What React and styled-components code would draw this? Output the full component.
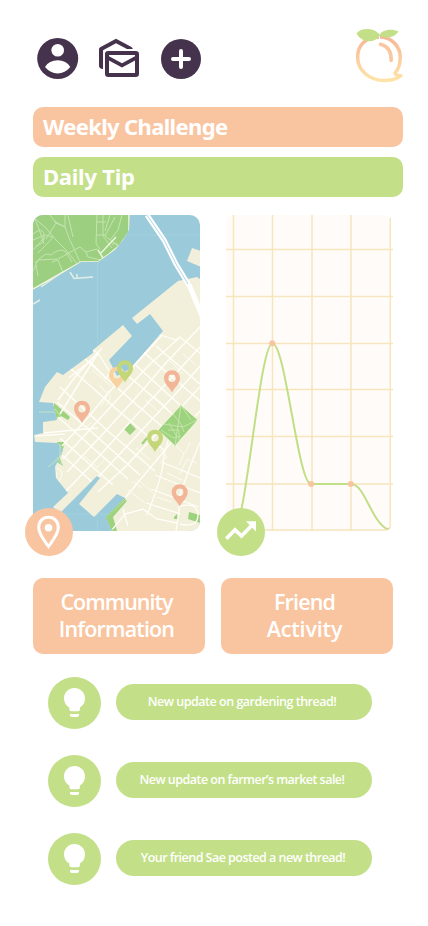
import React from "react";
import styled, { createGlobalStyle } from "styled-components";

const GlobalStyle = createGlobalStyle`
  * { box-sizing: border-box; }
  body { margin: 0; background: #fff; font-family: "Open Sans", "Noto Sans", sans-serif; }
  button { border: 0; padding: 0; margin: 0; background: none; font-family: inherit; color: inherit; }
  svg { display: block; }
`;

const peach = "#f9c5a1";
const lime = "#c3e088";
const plum = "#45334d";

const Page = styled.main`
  width: 428px;
  height: 926px;
  display: flex;
  flex-direction: column;
  padding: 27px 25px 0 33px;
  overflow: hidden;
  background: #fff;
`;

const Toolbar = styled.header`
  height: 80px;
  display: flex;
  justify-content: space-between;
  align-items: flex-start;
`;

const Actions = styled.nav`
  display: flex;
  gap: 14px;
  padding: 8px 0 0 1px;
`;

const IconButton = styled.button`
  width: 48px;
  height: 48px;
`;

const Banners = styled.section`
  display: flex;
  flex-direction: column;
  gap: 10px;
`;

const Banner = styled.h2`
  height: 40px;
  margin: 0;
  padding: 0 10px;
  border-radius: 10px;
  background: ${(p) => p.$color};
  color: #fff;
  font-family: "Noto Sans", sans-serif;
  font-size: 22px;
  font-weight: 700;
  line-height: 39px;
  letter-spacing: ${(p) => p.$tracking}px;
  white-space: nowrap;
`;

const Widgets = styled.section`
  display: flex;
  gap: 25px;
  padding-top: 18px;
`;

const Widget = styled.article`
  position: relative;
  width: ${(p) => p.$width}px;
  height: 316px;
`;

const MapFrame = styled.div`
  height: 100%;
  overflow: hidden;
  border-radius: 10px 10px 10px 0;
`;

const ChartFrame = styled.div`
  height: 100%;
  padding-left: 1px;
`;

const Badge = styled.span`
  position: absolute;
  left: -8px;
  bottom: -25px;
  width: 48px;
  height: 48px;
  border-radius: 50%;
  background: ${(p) => p.$color};
`;

const Choices = styled.section`
  display: flex;
  gap: 16px;
  padding-top: 47px;
`;

const Choice = styled.button`
  width: 172px;
  height: 76px;
  padding: 0 ${(p) => p.$inset}px 3px 0;
  border-radius: 10px;
  background: ${peach};
  color: #fff;
  font-size: 21.5px;
  font-weight: 600;
  line-height: 27px;
  text-align: center;
`;

const ChoiceLine = styled.span`
  display: block;
  letter-spacing: ${(p) => p.$tracking}px;
`;

const Feed = styled.ul`
  list-style: none;
  margin: 0;
  padding: 23px 0 0 15px;
  display: flex;
  flex-direction: column;
  gap: 26px;
`;

const FeedItem = styled.li`
  height: 52px;
  display: flex;
  align-items: flex-start;
  gap: 15px;
`;

const Bulb = styled.span`
  width: 53px;
  height: 52px;
  border-radius: 50%;
  background: ${lime};
`;

const Message = styled.p`
  width: 256px;
  height: 36px;
  margin: 7px 0 0;
  padding-right: ${(p) => p.$inset}px;
  border-radius: 18px;
  background: ${lime};
  color: #fff;
  font-size: 12.5px;
  font-weight: 600;
  line-height: 36px;
  text-align: center;
  letter-spacing: ${(p) => p.$tracking}px;
  white-space: nowrap;
`;

function AccountIcon() {
  return (
    <svg width="48" height="48" viewBox="34 35 48 48">
      <circle cx="57.7" cy="58.5" r="20.5" fill={plum} />
      <circle cx="57.7" cy="50.3" r="6.3" fill="#fff" />
      <path d="M45 67Q49 60.3 57.7 60.3T70.3 67Q65 73.4 57.7 73.4T45 67Z" fill="#fff" />
    </svg>
  );
}

function MailIcon() {
  return (
    <svg width="48" height="48" viewBox="96 35 48 48" fill="none">
      <path d="M99 49.3Q99 48 100.2 47.3L116 38.7L131 46.7Q132.6 47.7 132.8 49H127L116 43.2L103 50.3V69Q99 68.6 99 65.5Z" fill={plum} />
      <path
        fillRule="evenodd"
        fill={plum}
        d="M108.3 51H135.7Q139 51 139 54.3V73.7Q139 77 135.7 77H108.3Q105 77 105 73.7V54.3Q105 51 108.3 51ZM109 55V56.3L122 63.2L135 56.3V55ZM109 60.5V73H135V60.5L122 67.5Z"
      />
    </svg>
  );
}

function AddIcon() {
  return (
    <svg width="48" height="48" viewBox="158 35 48 48">
      <circle cx="181" cy="59" r="20" fill={plum} />
      <path d="M181 51V67M173 59H189" stroke="#fff" strokeWidth="4" strokeLinecap="round" />
    </svg>
  );
}

function PeachLogo() {
  return (
    <svg width="50" height="58" viewBox="353 27 50 58" fill="none">
      <defs>
        <linearGradient id="peachSkin" x1="0" y1="36" x2="0" y2="82" gradientUnits="userSpaceOnUse">
          <stop offset="0" stopColor="#f8b595" />
          <stop offset="1" stopColor="#fee5a9" />
        </linearGradient>
      </defs>
      <path
        d="M379 37.5C366 36 357.6 46 357.6 57C357.6 71 370 80.5 384 80.5C391 80.5 397 79 400.8 75.7C397 75.8 395 75 395 73C399 69 400.2 64 400.2 57C400.2 47 392 37 380 37"
        stroke="url(#peachSkin)" strokeWidth="3.5" strokeLinejoin="round"
      />
      <path d="M380.5 44.3C388 46 391.3 52 391.2 60.5" stroke="#fac7a2" strokeWidth="3.6" strokeLinecap="round" />
      <path d="M356.5 33.5C361 27.5 374 27.5 379.5 34.5C383 29 393 28.5 398.5 31.5C395 36.5 388 40 380 35.5C375 43.5 362 43.5 356.5 33.5Z" fill={lime} />
    </svg>
  );
}

const pins = [
  { x: 117, y: 376, color: "#f8d39f" },
  { x: 125, y: 369.5, color: "#c3d779" },
  { x: 172, y: 379.5, color: "#f3b598" },
  { x: 82, y: 410, color: "#f3b598" },
  { x: 155, y: 439, color: "#c3d779" },
  { x: 179.7, y: 493.5, color: "#f3b598" },
];

function MapPin({ x, y, color }) {
  return (
    <path
      transform={`translate(${x} ${y})`}
      fill={color}
      fillRule="evenodd"
      d="M0 13C-1.7 8.5-8 4.5-8-1.3C-8-6-4.4-9.3 0-9.3S8-6 8-1.3C8 4.5 1.7 8.5 0 13ZM0-5A3.7 3.7 0 1 0 0 2.4A3.7 3.7 0 1 0 0-5Z"
    />
  );
}

function CityMap() {
  return (
    <svg width="167" height="316" viewBox="33 215 167 316">
      <defs>
        <clipPath id="mainland">
          <path d="M200 279L197 277L178 281L132 318L137 324L150 314L163 331L130 369L117 376L109 360L132 336L123 325L93 350V353L63 375L57 372L45 387L39 402L53 403L57 420L43 422V433L34 435L35 442L58 443L63 450L55 467L56 478L68 493L53 507L60 513L97 476L100 478L79 504L94 517L117 494L125 498L106 517L112 531H200Z" />
        </clipPath>
        <clipPath id="forest">
          <path d="M33 215H130L129 230L123 240L115 250L98 262H81L58 276L33 290Z" />
        </clipPath>
      </defs>
      <rect x="33" y="215" width="167" height="316" fill="#9bcbdb" />
      <path d="M97.5 215V531M33 235H200M33 514H200" stroke="#a8d2df" strokeWidth=".5" />

      <g clipPath="url(#forest)" fill="none" stroke="#c3e4b0" strokeWidth="1">
        <rect x="33" y="215" width="100" height="76" fill="#9dcf81" stroke="none" />
        <path d="M33 217L46 228L56 240L66 250L79 266M50 215L56 223L65 227V215M56 223L46 239M65 227L69 238L80 262M65 227L54 221M52 262L58 260L66 280M33 271L38 260L58 259L76 249M33 250L45 237M33 240L45 235L53 237L46 245L38 253M33 234Q43 226 44 235T36 246M36 265L38 276M35 263Q46 251 51 255Q60 247 66 252L72 262M76 249L80 247L86 252L97 249L101 254M86 252L88 257L101 260M97 215L96 244L100 249M103 215V236L112 248M97 222H106M96 235H106M110 215L105 231M115 217L105 236L118 246M122 215L118 230L110 240M112 245Q116 240 119 247M35 219L39 229L44 244M68 215L73 237" />
        <path d="M33 289L58 275L81 262H98L109 254L120 245L129 232V215" stroke="#f2f6e6" strokeWidth="1.5" />
        <path d="M98 250L103 258M101 253L116 237" stroke="#edf5df" strokeWidth="1.5" />
      </g>
      <path d="M70 272L74 278.5L93 277M33 304L40 300M77 278V274M41 287L61 273" fill="none" stroke="#e4eee6" strokeWidth="1.5" />
      <path d="M192 248L201 251V267L187 261Z" fill="#f1eedb" />

      <g clipPath="url(#mainland)">
        <rect x="33" y="215" width="167" height="316" fill="#f2efdb" />
        <path d="M54 403L60 408L70 417L68 420L61 416L53 421ZM57 442H65L61 456L59 450ZM53 456H59L63 466L54 460Z" fill="#9dd27e" />
        <path d="M130 423L136 429L130 435L124 429ZM122 497L127 501L113 517L117 531H107L104 517ZM189 512L200 515V523L188 519ZM174 517L177 514L178 519H174Z" fill="#9dd27e" />
        <g fill="none" stroke="#fffef8" strokeWidth="1.5">
          <path d="M162 335L130 369M157 341L133 367L108 393L86 420L62 446M179 338L149 365L104 414L63 459M200 327L165 364L141 392L102 435L67 472M200 347L178 371L132 420L93 463L66 491M200 366L180 389L143 429L101 474L80 496M200 387L158 432L124 468L98 492M200 411L170 444L125 498M102 348L75 377L58 400M98 353L60 414" />
          <path d="M156 346L200 384M142 351L200 401M129 359L180 405M113 363L160 403L183 424M85 359L130 399L172 435M70 368L112 405L165 451M60 387L109 432L155 471M57 402L95 435L140 475M58 417L128 479M60 438L113 485M62 455L92 482" />
          <path d="M157 334L176 340L180 337L200 353M172 432Q164 448 163 463T147 515M200 442L188 472L180 495L179 511L176 531M163 463L174 467L200 478M155 475L200 493M151 489L199 507M146 503L181 514M111 531L125 514L143 509L157 519L177 523M123 509L128 526M180 506Q198 502 198 515T180 524M93 350L98 353L110 372L106 379L90 361L69 378M44 433L64 431L98 428M36 436L65 434" strokeWidth="1.3" />
        </g>
        <g fill="none" stroke="#fffdf4" strokeWidth=".9">
          <path d="M80 377L96 391M92 370L111 386M146 400L160 413M155 397L168 409M83 455L98 468M112 450L125 463M136 448L150 460M137 479L153 493M128 490L145 503M180 474L187 459L197 463M185 454L190 442M171 440L184 454L179 465M169 360L183 374M183 354L196 365M160 450L167 457L160 463" />
          <path d="M57 468Q66 470 59 482T57 472M99 385L108 394L101 406M107 390Q114 396 106 405M132 481L142 488M84 429L91 423M97 468L104 460M167 473L182 480M157 497L171 502" />
        </g>
        <path d="M181 405L198 420L175 446L158 430Z" fill="#9dd27e" stroke="#f5f7df" />
        <g fill="none" stroke="#c5e5aa" strokeWidth="1">
          <path d="M181 405L178 425L175 446M164 424L183 427L197 420M173 414L181 424L184 432M169 423L177 437M161 430L173 438L181 436M168 430H179V440M182 407L191 420M106 518L125 500M55 409L61 417" />
        </g>
        <path d="M142 444L147 438" stroke="#9dd27e" strokeWidth="2" />
        <path d="M125 498L106 517L112 531" fill="none" stroke="#9dd27e" strokeWidth="2" />
      </g>
      <path d="M39 412H55M60 444V457L48 467M57 457L63 466" stroke="#bee5c5" fill="none" />
      <path d="M147 215L164 240L176 264L190 287L202 316" fill="none" stroke="#fff" strokeWidth="5" />
      <path d="M147 215L164 240L176 264L188 284" fill="none" stroke="#b5d8e3" strokeWidth="1" />
      {pins.map((pin) => <MapPin key={pin.x} {...pin} />)}
    </svg>
  );
}

const columns = [233.5, 272.5, 312, 351, 390.3];
const rows = [249.5, 296.5, 343.5, 389.5, 436.5, 484, 530];

function ActivityChart() {
  return (
    <svg width="168" height="316" viewBox="226 215 168 316">
      <path d="M226 222Q226 215 234 215H383Q391 215 391 223V524Q391 531 383 531H226Z" fill="#fffbf8" />
      <g stroke="#f6e6bd" strokeWidth="1.5">
        {columns.map((x, i) => <path key={x} d={`M${x} ${i === 4 ? 218 : 215}V${i === 4 ? 527 : 531}`} />)}
        {rows.map((y, i) => <path key={y} d={`M226 ${y}H${i === 6 ? 386 : 393}`} />)}
      </g>
      <path
        d="M233.5 530C246 530 259.5 343.5 272.5 343.5S298 484 311 484H351C365 484 371 522 388 529.5"
        fill="none" stroke="#c0df86" strokeWidth="2"
      />
      <path d="M387.5 529.5L390 527.5" stroke={peach} strokeWidth="1.5" />
      {[[272.3, 343.3], [311.2, 484], [350.8, 484]].map(([cx, cy]) => (
        <circle key={cx} cx={cx} cy={cy} r="3" fill={peach} />
      ))}
    </svg>
  );
}

function LocationIcon() {
  return (
    <svg width="48" height="48" viewBox="25 508 48 48">
      <path d="M48.5 546.5C44.5 540.8 38.7 534 38.7 527.5C38.7 521.5 42.8 517.3 48.5 517.3S58.3 521.5 58.3 527.5C58.3 534 52.5 540.8 48.5 546.5Z" fill="none" stroke="#fff" strokeWidth="3" />
      <circle cx="48.5" cy="527.7" r="3.8" fill="#fff" />
    </svg>
  );
}

function TrendIcon() {
  return (
    <svg width="48" height="48" viewBox="217 508 48 48">
      <path d="M226.3 538.7L235 529.8L241.5 536L252 525.2" stroke="#fff" strokeWidth="3.7" fill="none" />
      <path d="M246 521.3H256V531.5Z" fill="#fff" />
    </svg>
  );
}

function BulbIcon() {
  return (
    <svg width="53" height="52" viewBox="0 0 53 52" fill="#fff">
      <path d="M26.5 11C20.7 11 16 15.6 16 21.4C16 25.4 18.2 28.7 21.3 30.5V32Q21.3 34.2 23.4 34.2H30Q32 34.2 32 32V30.5C35.2 28.5 37 25.2 37 21.4C37 15.6 32.3 11 26.5 11Z" />
      <path d="M22 37H31V38.2Q31 40 29 40H24Q22 40 22 38.2Z" />
    </svg>
  );
}

const choices = [
  { inset: 5, lines: [{ text: "Community", tracking: -1.0 }, { text: "Information", tracking: -0.85 }] },
  { inset: 5, lines: [{ text: "Friend", tracking: -0.85 }, { text: "Activity", tracking: -0.15 }] },
];

const updates = [
  { text: "New update on gardening thread!", tracking: -0.48, inset: 4 },
  { text: "New update on farmer’s market sale!", tracking: -0.53, inset: 4 },
  { text: "Your friend Sae posted a new thread!", tracking: -0.53, inset: 2 },
];

export default function App() {
  return (
    <Page>
      <GlobalStyle />
      <Toolbar>
        <Actions>
          <IconButton aria-label="Account"><AccountIcon /></IconButton>
          <IconButton aria-label="Messages"><MailIcon /></IconButton>
          <IconButton aria-label="Add"><AddIcon /></IconButton>
        </Actions>
        <PeachLogo />
      </Toolbar>
      <Banners>
        <Banner $color={peach} $tracking={-0.65}>Weekly Challenge</Banner>
        <Banner $color={lime} $tracking={-0.25}>Daily Tip</Banner>
      </Banners>
      <Widgets>
        <Widget $width={167}>
          <MapFrame><CityMap /></MapFrame>
          <Badge $color={peach}><LocationIcon /></Badge>
        </Widget>
        <Widget $width={169}>
          <ChartFrame><ActivityChart /></ChartFrame>
          <Badge $color={lime}><TrendIcon /></Badge>
        </Widget>
      </Widgets>
      <Choices>
        {choices.map(({ inset, lines }) => (
          <Choice key={lines[0].text} $inset={inset}>
            {lines.map((line) => (
              <ChoiceLine key={line.text} $tracking={line.tracking}>{line.text}</ChoiceLine>
            ))}
          </Choice>
        ))}
      </Choices>
      <Feed>
        {updates.map((update) => (
          <FeedItem key={update.text}>
            <Bulb><BulbIcon /></Bulb>
            <Message $tracking={update.tracking} $inset={update.inset}>{update.text}</Message>
          </FeedItem>
        ))}
      </Feed>
    </Page>
  );
}
